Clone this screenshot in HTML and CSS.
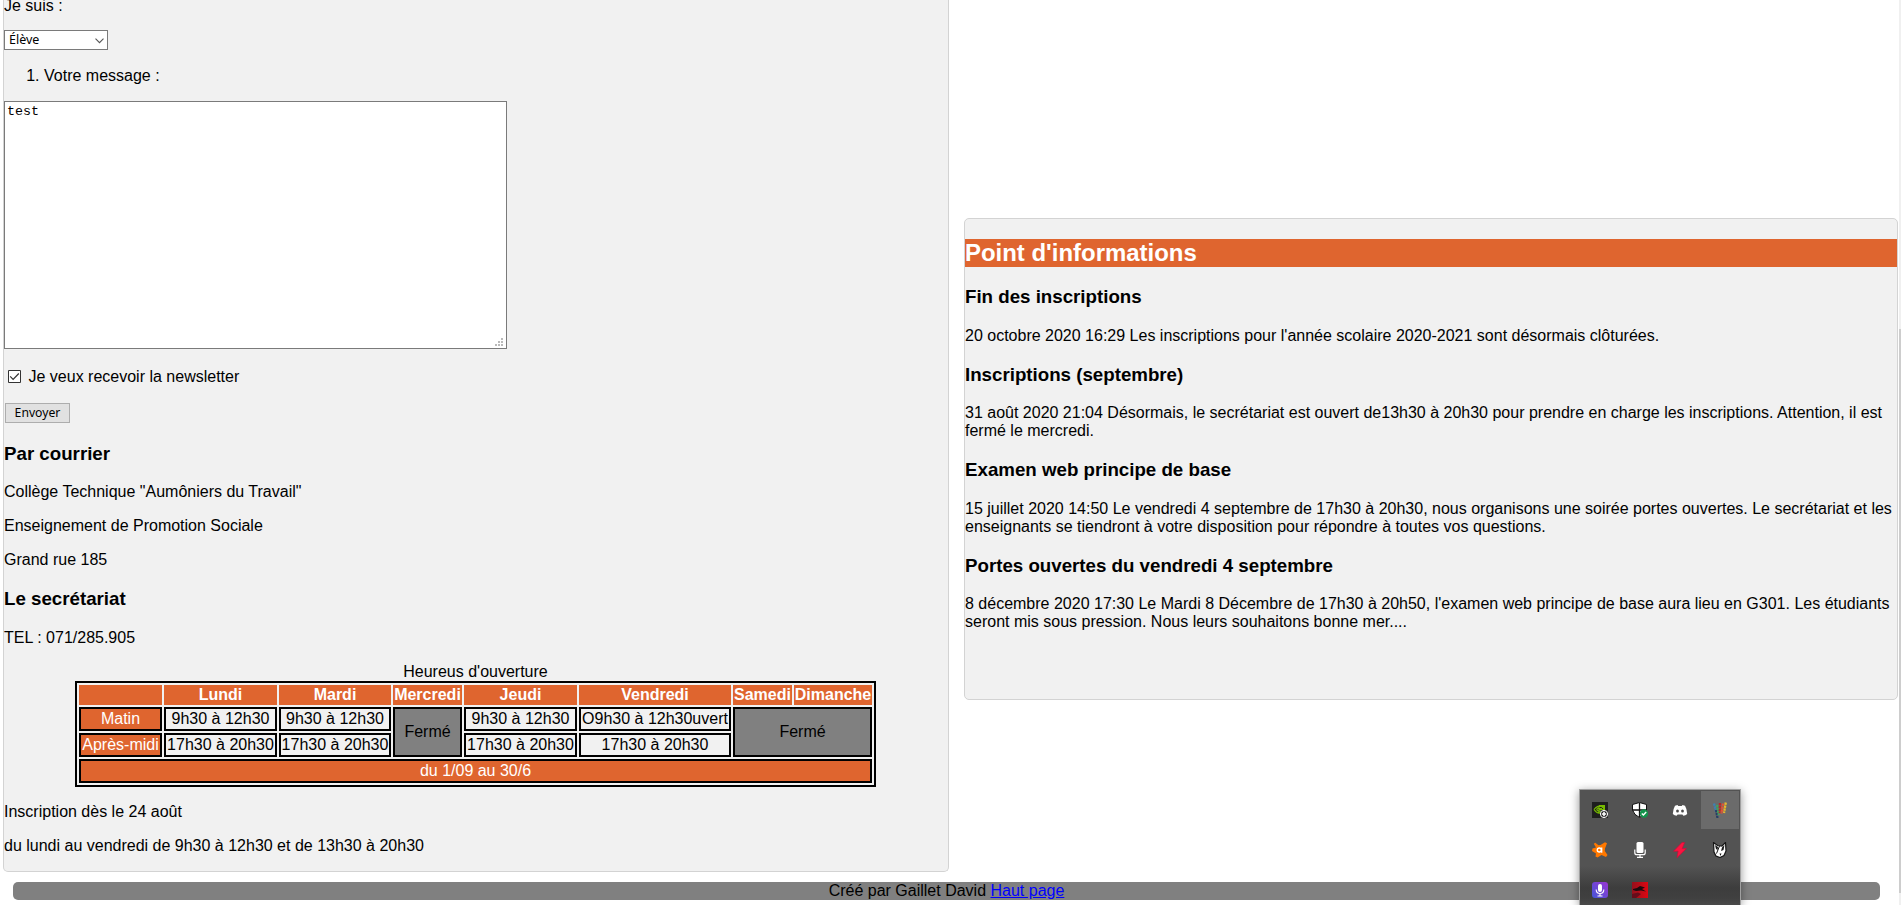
FILE: index.html
```html
<!DOCTYPE html>
<html lang="fr">
<head>
<meta charset="utf-8">
<title>Contact</title>
<link rel="stylesheet" href="styles.css">
</head>
<body>
<main class="columns">
  <section class="card contact">
    <form class="form">
      <label class="role-label" for="role">Je suis :</label>
      <div class="select-wrap">
        <select class="select" id="role"><option>Élève</option></select>
        <svg class="chevron" viewBox="0 0 9 6" width="9" height="6"><path d="M.5 .7 4.5 4.7 8.5 .7" fill="none" stroke="#555" stroke-width="1.1"/></svg>
      </div>
      <ol class="fields"><li>Votre message :</li></ol>
      <div class="message-wrap">
        <textarea class="message">test</textarea>
        <svg class="grip" viewBox="0 0 8 8" width="8" height="8" fill="#bababa"><path d="M6 0h2v2H6zM3 3h2v2H3zM6 3h2v2H6zM0 6h2v2H0zM3 6h2v2H3zM6 6h2v2H6z"/></svg>
      </div>
      <label class="newsletter">
        <svg class="check" viewBox="0 0 13 13" width="13" height="13"><path d="M.5 .5h12v12H.5z" fill="#fff" stroke="#333"/><path d="M2.2 6.4 5.1 9.3 10.8 3.5" fill="none" stroke="#333" stroke-width="1.2"/></svg>
        <span>Je veux recevoir la newsletter</span>
      </label>
      <button class="send" type="button">Envoyer</button>
    </form>
    <h3>Par courrier</h3>
    <p>Collège Technique "Aumôniers du Travail"</p>
    <p>Enseignement de Promotion Sociale</p>
    <p>Grand rue 185</p>
    <h3>Le secrétariat</h3>
    <p>TEL : 071/285.905</p>
    <table class="hours">
      <caption>Heureus d'ouverture</caption>
      <colgroup><col class="c-label"><col class="c-day"><col class="c-tue"><col class="c-wed"><col class="c-day"><col class="c-fri"><col class="c-sat"><col class="c-sun"></colgroup>
      <thead><tr><th></th><th>Lundi</th><th>Mardi</th><th>Mercredi</th><th>Jeudi</th><th>Vendredi</th><th>Samedi</th><th>Dimanche</th></tr></thead>
      <tbody>
        <tr><td class="accent">Matin</td><td>9h30 à 12h30</td><td>9h30 à 12h30</td><td class="closed" rowspan="2">Fermé</td><td>9h30 à 12h30</td><td>O9h30 à 12h30uvert</td><td class="closed" rowspan="2" colspan="2">Fermé</td></tr>
        <tr><td class="accent">Après-midi</td><td>17h30 à 20h30</td><td>17h30 à 20h30</td><td>17h30 à 20h30</td><td>17h30 à 20h30</td></tr>
        <tr><td class="accent" colspan="8">du 1/09 au 30/6</td></tr>
      </tbody>
    </table>
    <p>Inscription dès le 24 août</p>
    <p>du lundi au vendredi de 9h30 à 12h30 et de 13h30 à 20h30</p>
  </section>
  <section class="card news">
    <h2>Point d'informations</h2>
    <h3>Fin des inscriptions</h3>
    <p>20 octobre 2020 16:29 Les inscriptions pour l'année scolaire 2020-2021 sont désormais clôturées.</p>
    <h3>Inscriptions (septembre)</h3>
    <p>31 août 2020 21:04 Désormais, le secrétariat est ouvert de13h30 à 20h30 pour prendre en charge les inscriptions. Attention, il est fermé le mercredi.</p>
    <h3>Examen web principe de base</h3>
    <p>15 juillet 2020 14:50 Le vendredi 4 septembre de 17h30 à 20h30, nous organisons une soirée portes ouvertes. Le secrétariat et les enseignants se tiendront à votre disposition pour répondre à toutes vos questions.</p>
    <h3>Portes ouvertes du vendredi 4 septembre</h3>
    <p>8 décembre 2020 17:30 Le Mardi 8 Décembre de 17h30 à 20h50, l'examen web principe de base aura lieu en G301. Les étudiants seront mis sous pression. Nous leurs souhaitons bonne mer....</p>
  </section>
</main>
<footer class="footer">Créé par Gaillet David <a href="#">Haut page</a></footer>

<div class="scrollbar"><div class="thumb"></div></div>

<aside class="tray">
  <div class="slot"><svg viewBox="0 0 16 16"><path d="M0 0h16v16H0z" fill="#1e1e1e"/><path d="M2 7.5Q6 2.5 13 4M2 7.5Q5 12 9 11M4.5 7.5Q7 5 10 6.5M4.5 7.5Q6 10 9 9M7 3.5v8" fill="none" stroke="#76b900" stroke-width="1.2"/><path d="M7 3h6v5H7z" fill="#76b900"/><path d="M7.5 5.5Q10 4.8 11 7" fill="none" stroke="#1e1e1e"/><circle cx="12" cy="12" r="3.6" fill="#222" stroke="#fff"/><path d="M12 9.8v4.4M9.8 12h4.4" stroke="#fff" stroke-width="1.6"/></svg></div>
  <div class="slot"><svg viewBox="0 0 16 16"><path d="M7.5 .5 14.5 2.5V8Q13 13 7.5 15.5 2 13 .5 8V2.5z" fill="#fff" stroke="#111"/><path d="M7.5 1v14M.5 8h14" stroke="#111" stroke-width="1.3"/><circle cx="12" cy="11.5" r="4.2" fill="#13934b"/><path d="m9.8 11.5 1.6 1.6 2.8-3" fill="none" stroke="#fff" stroke-width="1.4"/></svg></div>
  <div class="slot"><svg viewBox="0 0 16 16"><path d="M5.5 3 3 3.8Q1 7 .8 12 2.5 13.7 4.6 13.8L5.6 12.4h4.8l1 1.4q2.1-.1 3.8-1.8Q15 7 13 3.8L10.5 3 9.8 4H6.2z" fill="#fff"/><ellipse cx="5.5" cy="9" rx="1.4" ry="1.6" fill="#4a4a4a"/><ellipse cx="10.5" cy="9" rx="1.4" ry="1.6" fill="#4a4a4a"/></svg></div>
  <div class="slot active"><svg viewBox="0 0 16 16"><g fill="none" stroke-width="2.3" stroke-dasharray="2.4 .6"><path d="M2 1.5 4.2 10" stroke="#3c82b4"/><path d="M4 8 5.5 16" stroke="#263f66"/><path d="M5 3 6.8 13" stroke="#44a35b"/><path d="M8 1 7.8 11" stroke="#b72828"/><path d="M11 1.5 9.5 11.5" stroke="#e35435"/><path d="M13.8 .5 12 11" stroke="#e9b52c"/></g></svg></div>
  <div class="slot"><svg viewBox="0 0 16 16"><path d="M8.5 3 13 .3 15 1.3 13 6.5 12.8 9 15.5 13 14 15 9.5 13 5.5 15.5 3.5 14.5 4 11.5 0 9 .5 6.5 4 5.5 1.8 1.8 3.3.8 6.5 3.2z" fill="#ff7800"/><circle cx="7.3" cy="8" r="2" fill="none" stroke="#fff" stroke-width="1.4"/><path d="M9.7 5.4v5.3" stroke="#fff" stroke-width="1.3"/></svg></div>
  <div class="slot"><svg viewBox="0 0 16 16"><rect x="4.5" width="7" height="11" rx="1.5" fill="#fff"/><path d="M2.8 7.5v3.2q0 2 2 2h6.4q2 0 2-2V7.5M8 13v2.4M5 15.4h6" fill="none" stroke="#fff" stroke-width="1.2"/></svg></div>
  <div class="slot"><svg viewBox="0 0 16 16"><path d="M10 .4 1.5 9.2h4.6L5 15.7 14.4 6.6H10.2L12.6.5z" fill="#fb1440" stroke="#c90f3a" stroke-width=".7"/></svg></div>
  <div class="slot"><svg viewBox="0 0 16 16"><path d="M1.5.5 5.5 3.5 10 4 13.5.5 14 9 12 13.5 8 15.5 4 14 2 10z" fill="#fff" stroke="#161616" stroke-width="1.2"/><path d="M3 3 6 5 5.5 8 4 7zM12.5 3 10 5.5 9 9 11.5 8zM7.5 11.5 8.5 14 9.5 11.5z" fill="#161616"/><path d="M7.5 4 4.5 11.5" stroke="#161616"/></svg></div>
  <div class="slot"><svg viewBox="0 0 16 16"><defs><linearGradient id="voice" x1="0" y1="1" x2="1" y2="0"><stop offset="0" stop-color="#4557d8"/><stop offset="1" stop-color="#9a35d2"/></linearGradient></defs><rect width="16" height="16" rx="3" fill="url(#voice)"/><rect x="6" y="2" width="4" height="8" rx="2" fill="#fff"/><path d="M4.2 7.5q0 4 3.8 4t3.8-4M8 11.5V14M5.5 14h5" fill="none" stroke="#fff" stroke-width="1.1"/></svg></div>
  <div class="slot"><svg viewBox="0 0 16 16"><defs><linearGradient id="red"><stop offset="0" stop-color="#95101c"/><stop offset="1" stop-color="#dc0712"/></linearGradient></defs><path d="M0 0h16v16H0z" fill="url(#red)"/><path d="M1 7 5 6 8 4 13 5.5 10 7 14 9.5 9 8.5 4 9 1 8z" fill="#1c0b0e"/><path d="M0 12 6 10.5 9 12 4 16H0z" fill="#650d1b"/></svg></div>
</aside>
</body>
</html>
```
FILE: styles.css
```css
html, body { height: 100%; }
body {
  margin: 0;
  overflow: hidden;
  position: relative;
  background: #fff;
  color: #000;
  font: 16px/18px "Liberation Sans", Arial, sans-serif;
}
p { margin: 16px 0; }
h3 { margin: 18.72px 0; font-size: 18.72px; line-height: 22px; }
h2 { margin: 20px 0 19.2px; background: #df652f; color: #fff; font-size: 23.95px; line-height: 28px; }

.columns { display: flex; align-items: flex-start; gap: 15px; padding-left: 3px; }
.card { box-sizing: border-box; border: 1px solid #d3d3d3; border-radius: 5px; background: #f1f1f1; }
.contact { width: 946px; height: 872px; border-top: 0; border-radius: 0 0 5px 5px; }
.news { width: 934px; height: 482px; margin-top: 218px; }
.news h3 { padding-bottom: 1px; line-height: 21px; }

.form { display: flex; flex-direction: column; align-items: flex-start; margin-bottom: 19.6px; }
.role-label { margin-top: -3px; }
.select-wrap { position: relative; margin-top: 15px; height: 20px; }
.select {
  appearance: none;
  display: block;
  box-sizing: border-box;
  width: 104px;
  height: 20px;
  padding: 0 4px;
  border: 1px solid #7a7a7a;
  border-radius: 0;
  background: #fff;
  color: #000;
  font: 12.5px/18px "Noto Sans", sans-serif;
}
.chevron { position: absolute; right: 4px; top: 8px; }
.fields { margin: 17px 0 16px; padding-left: 40px; }
.message-wrap { position: relative; width: 503px; height: 248px; }
.message {
  display: block;
  box-sizing: border-box;
  width: 100%;
  height: 100%;
  margin: 0;
  padding: 2px;
  border: 1px solid #7a7a7a;
  border-radius: 0;
  resize: none;
  background: #fff;
  color: #000;
  font: 13.33px/15px "Liberation Mono", monospace;
}
.grip { position: absolute; right: 4px; bottom: 3px; }
.newsletter { display: flex; gap: 7.5px; margin-top: 19px; padding-left: 4px; }
.check { margin-top: 2px; }
.send {
  box-sizing: border-box;
  width: 65px;
  height: 20px;
  margin: 17px 0 0 1px;
  padding: 0;
  border: 1px solid #adadad;
  border-radius: 0;
  background: #e1e1e1;
  color: #000;
  font: 12.2px/18px "Noto Sans", sans-serif;
}

.hours { table-layout: fixed; width: 801px; margin: 0 0 0 71px; border: 2px solid #000; border-spacing: 2px; text-align: center; }
.hours th, .hours td { padding: 1px 0; white-space: nowrap; }
.hours th { background: #df652f; color: #fff; }
.hours td { border: 2px solid #000; }
.hours td.accent { background: #df652f; color: #fff; }
.hours td.closed { background: #808080; }
.c-label { width: 83px; }
.c-day { width: 113px; }
.c-tue { width: 112px; }
.c-wed { width: 69px; }
.c-fri { width: 152px; }
.c-sat { width: 59px; }
.c-sun { width: 78px; }

.footer { width: 1867px; height: 18px; margin: 10px 0 0 13px; border-radius: 5px; background: #808080; text-align: center; }
.footer a { color: #00f; }

.scrollbar { position: absolute; top: 0; right: 0; width: 2px; height: 905px; background: #f0f0f0; }
.thumb { height: 564px; margin-top: 329px; background: #cdcdcd; }

.tray {
  position: absolute;
  left: 1579px;
  top: 789px;
  display: grid;
  grid-template-columns: repeat(4, 40px);
  grid-auto-rows: 40px;
  height: 116px;
  overflow: hidden;
  border: 1px solid #a0a0a0;
  border-bottom: 0;
  box-sizing: border-box;
  background: linear-gradient(#535353 0, #535353 76px, #3d3d3d 98px, #404040 108px, #4b4b4b 116px);
  box-shadow: 0 2px 9px rgba(0, 0, 0, .4);
}
.slot { display: grid; place-items: center; margin: 1px; }
.slot.active { background: #6b6b6b; }
.slot svg { width: 16px; height: 16px; }
```
